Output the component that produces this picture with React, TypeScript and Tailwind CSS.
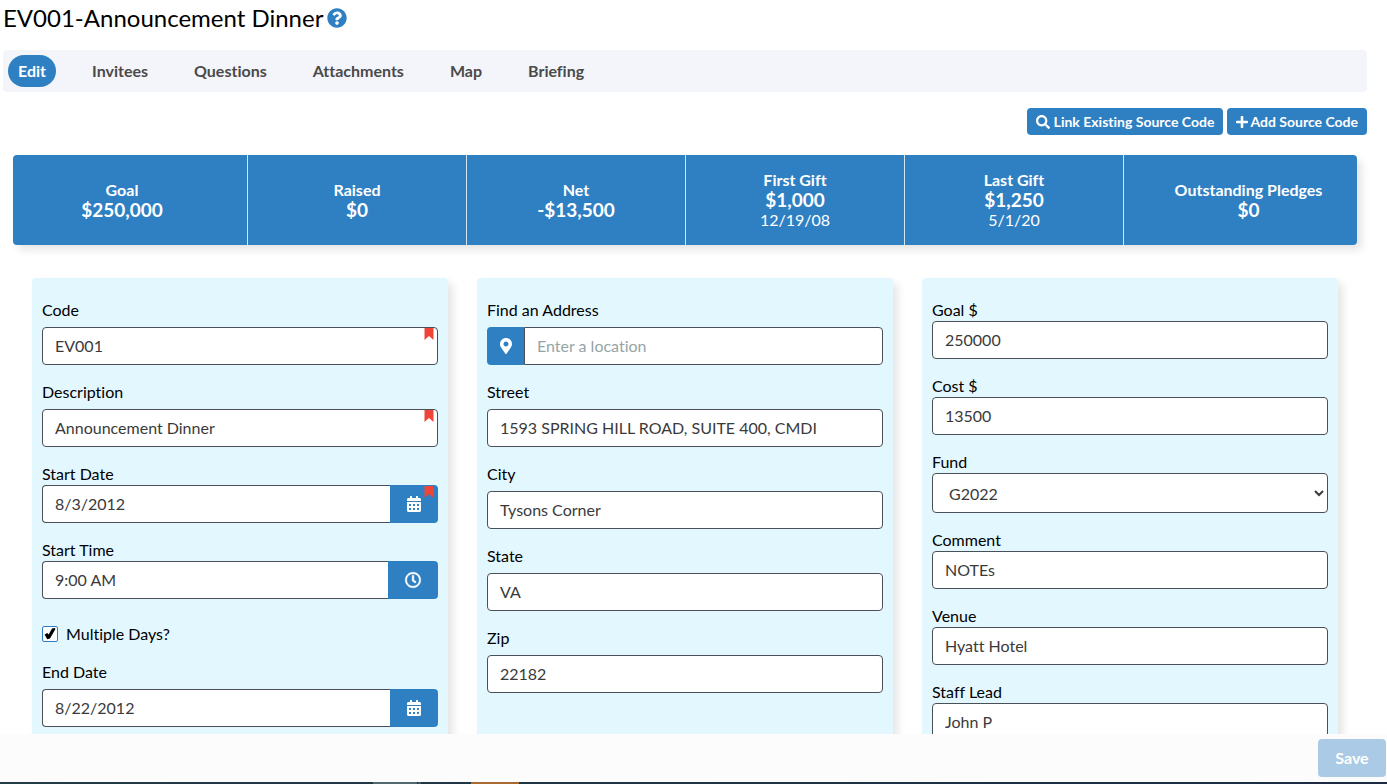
import React from 'react';
import { FaCalendarAlt, FaMapMarkerAlt, FaPlus, FaQuestionCircle, FaRegClock, FaSearch } from 'react-icons/fa';

const TABS = ['Edit', 'Invitees', 'Questions', 'Attachments', 'Map', 'Briefing'];

const STATS = [
  { label: 'Goal', value: '$250,000' },
  { label: 'Raised', value: '$0' },
  { label: 'Net', value: '-$13,500' },
  { label: 'First Gift', value: '$1,000', date: '12/19/08' },
  { label: 'Last Gift', value: '$1,250', date: '5/1/20' },
  { label: 'Outstanding Pledges', value: '$0' },
];

interface FieldProps {
  id: string;
  label: string;
  value?: string;
  placeholder?: string;
  tight?: boolean;
  required?: boolean;
  before?: React.ReactNode;
  after?: React.ReactNode;
}

const RequiredFlag = () => (
  <svg viewBox="0 0 10 12" className="absolute top-px right-1 h-3 w-2.5" aria-hidden="true">
    <path d="M0.5 0H9.5V12L5 8L0.5 12Z" fill="#f04438" />
  </svg>
);

const Field: React.FC<FieldProps> = ({ id, label, value, placeholder, tight, required, before, after }) => (
  <div>
    <label htmlFor={id} className={`block leading-[22px] text-black ${tight ? '' : 'mb-1.5'}`}>
      {label}
    </label>
    <div className="relative flex h-[38px]">
      {before}
      <input
        id={id}
        type="text"
        defaultValue={value}
        placeholder={placeholder}
        required={required}
        className={`min-w-0 flex-1 border border-[#495057] bg-white px-3 text-[#3a3a3a] placeholder:text-[#95a5a6] ${
          before ? 'rounded-r' : after ? 'rounded-l border-r-0' : 'rounded'
        }`}
      />
      {after}
      {required && <RequiredFlag />}
    </div>
  </div>
);

const DateButton: React.FC<{ label: string }> = ({ label }) => (
  <button type="button" aria-label={label} className="flex w-12 items-center justify-center rounded-r bg-[#2f80c3] text-white">
    <FaCalendarAlt className="size-4" />
  </button>
);

const Card: React.FC<{ children: React.ReactNode }> = ({ children }) => (
  <section className="flex flex-col gap-4 rounded bg-[#e3f7ff] px-2.5 pt-[21px] pb-10 shadow-[5px_5px_8px_rgba(0,0,0,0.1)]">
    {children}
  </section>
);

export default function App() {
  return (
    <div className="flex h-screen flex-col bg-white font-['Lato',sans-serif] text-base text-black [font-variant-ligatures:none]">
      <main className="min-h-0 flex-1 overflow-y-auto pr-5 pl-[3px] [scrollbar-width:none]">
        <h1 className="flex h-9 items-center gap-1 text-2xl">
          EV001-Announcement Dinner
          <FaQuestionCircle className="size-5 text-[#2f80c3]" />
        </h1>

        <nav className="mt-3.5 flex h-[42px] items-center gap-[26px] rounded-sm bg-[#f4f5fa] px-[5px]">
          {TABS.map((tab, i) => (
            <a
              key={tab}
              href="#"
              className={`flex h-8 items-center rounded-full px-2.5 font-bold ${
                i === 0 ? 'bg-[#2f80c3] text-white' : 'text-[#4a4a4a]'
              }`}
            >
              {tab}
            </a>
          ))}
        </nav>

        <div className="mt-4 flex justify-end gap-1 text-sm font-bold text-white">
          <button type="button" className="flex h-[27px] items-center gap-1 rounded-sm bg-[#2f80c3] px-[9px]">
            <FaSearch className="size-3.5" />
            Link Existing Source Code
          </button>
          <button type="button" className="flex h-[27px] items-center gap-0.5 rounded-sm bg-[#2f80c3] px-[9px]">
            <FaPlus className="h-3.5 w-3" />
            Add Source Code
          </button>
        </div>

        <div className="mx-2.5 mt-5 grid h-[90px] grid-cols-[235fr_repeat(4,219fr)_233fr] rounded bg-[#2f80c3] text-center leading-5 text-white shadow-[5px_5px_8px_rgba(0,0,0,0.1)]">
          {STATS.map((stat) => (
            <div
              key={stat.label}
              className="flex flex-col justify-center border-r border-white/80 first:pr-4 last:border-r-0 last:pl-4"
            >
              <span className="font-bold">{stat.label}</span>
              <span className="text-[19px] leading-5 font-bold">{stat.value}</span>
              {stat.date && <span>{stat.date}</span>}
            </div>
          ))}
        </div>

        <form className="mx-[29px] mt-[33px] mb-8 grid grid-cols-3 gap-[29px]">
          <Card>
            <Field id="code" label="Code" value="EV001" required />
            <Field id="description" label="Description" value="Announcement Dinner" required />
            <Field
              id="start-date"
              label="Start Date"
              value="8/3/2012"
              tight
              required
              after={<DateButton label="Pick start date" />}
            />
            <Field
              id="start-time"
              label="Start Time"
              value="9:00 AM"
              tight
              after={
                <button
                  type="button"
                  aria-label="Pick start time"
                  className="flex w-[50px] items-center justify-center rounded-r bg-[#2f80c3] text-white"
                >
                  <FaRegClock className="size-4 overflow-visible stroke-current stroke-[14]" />
                </button>
              }
            />
            <label className="mt-2 flex items-center gap-2 leading-[22px]">
              <span className="grid size-4 place-items-center">
                <input
                  type="checkbox"
                  defaultChecked
                  className="peer col-start-1 row-start-1 size-4 appearance-none rounded-xs border border-[#2f80c3] bg-white"
                />
                <svg
                  viewBox="0 0 16 16"
                  className="pointer-events-none invisible col-start-1 row-start-1 size-4 peer-checked:visible"
                >
                  <path d="M2.6 8.4 5.4 7 6.6 8.4 10 2.6 13.2 2 13.2 3.6 8 12.4 5.2 13.2Z" fill="#000" />
                </svg>
              </span>
              Multiple Days?
            </label>
            <Field id="end-date" label="End Date" value="8/22/2012" after={<DateButton label="Pick end date" />} />
          </Card>

          <Card>
            <Field
              id="find-address"
              label="Find an Address"
              placeholder="Enter a location"
              before={
                <span className="flex w-[37px] items-center justify-center rounded-l bg-[#2f80c3] text-white">
                  <FaMapMarkerAlt className="size-4" />
                </span>
              }
            />
            <Field id="street" label="Street" value="1593 SPRING HILL ROAD, SUITE 400, CMDI" />
            <Field id="city" label="City" value="Tysons Corner" />
            <Field id="state" label="State" value="VA" />
            <Field id="zip" label="Zip" value="22182" />
          </Card>

          <Card>
            <Field id="goal" label="Goal $" value="250000" tight />
            <Field id="cost" label="Cost $" value="13500" tight />
            <div>
              <label htmlFor="fund" className="block leading-[22px]">
                Fund
              </label>
              <select
                id="fund"
                className="block h-10 w-full rounded border border-[#495057] bg-white pl-3 text-[#3a3a3a]"
              >
                <option>G2022</option>
              </select>
            </div>
            <Field id="comment" label="Comment" value="NOTEs" tight />
            <Field id="venue" label="Venue" value="Hyatt Hotel" tight />
            <Field id="staff-lead" label="Staff Lead" value="John P" tight />
          </Card>
        </form>
      </main>

      <footer className="flex h-12 shrink-0 items-center justify-end bg-[#fcfcfc] pr-px">
        <button type="button" disabled className="h-[38px] w-[68px] rounded-sm bg-[#abcae6] font-bold text-white">
          Save
        </button>
      </footer>

      {/* Taskbar edge */}
      <div className="flex h-0.5 shrink-0 bg-linear-to-r from-[#243c46] to-[#1c2b42]">
        <div className="ml-[373px] w-11 bg-[#526a70]" />
        <div className="ml-px w-[3px] bg-[#45575e]" />
        <div className="ml-[50px] w-12 bg-[#a86a30]" />
      </div>
    </div>
  );
}
